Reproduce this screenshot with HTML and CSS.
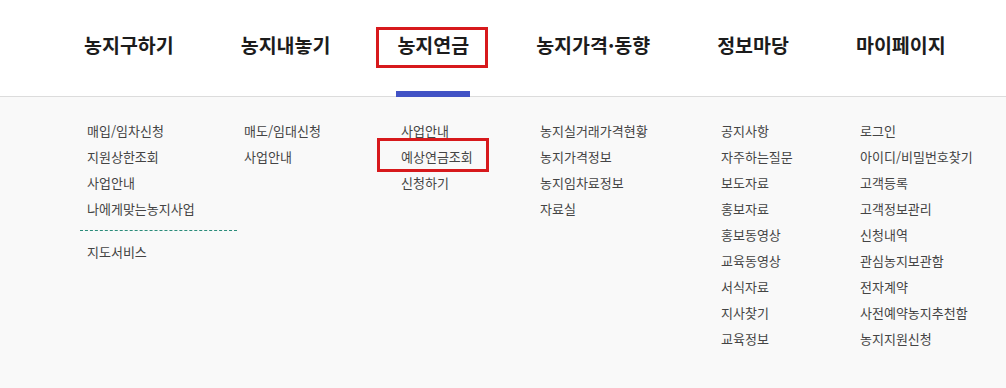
FILE: index.html
```html
<!DOCTYPE html>
<html lang="ko">
<head>
<meta charset="utf-8">
<link rel="stylesheet" href="styles.css">
</head>
<body>
<header class="header">
  <ul class="gnb">
    <li class="gnb-item"><a>농지구하기</a></li>
    <li class="gnb-item"><a>농지내놓기</a></li>
    <li class="gnb-item active"><a>농지연금</a><span class="mark mark-top"></span><span class="bar"></span></li>
    <li class="gnb-item"><a>농지가격·동향</a></li>
    <li class="gnb-item"><a>정보마당</a></li>
    <li class="gnb-item"><a>마이페이지</a></li>
  </ul>
</header>
<section class="panel">
  <ul class="col c1">
    <li>매입/임차신청</li>
    <li>지원상한조회</li>
    <li>사업안내</li>
    <li>나에게맞는농지사업</li>
    <li class="sep"></li>
    <li>지도서비스</li>
  </ul>
  <ul class="col c2">
    <li>매도/임대신청</li>
    <li>사업안내</li>
  </ul>
  <ul class="col c3">
    <li>사업안내</li>
    <li class="hl">예상연금조회<span class="mark mark-sub"></span></li>
    <li>신청하기</li>
  </ul>
  <ul class="col c4">
    <li>농지실거래가격현황</li>
    <li>농지가격정보</li>
    <li>농지임차료정보</li>
    <li>자료실</li>
  </ul>
  <ul class="col c5">
    <li>공지사항</li>
    <li>자주하는질문</li>
    <li>보도자료</li>
    <li>홍보자료</li>
    <li>홍보동영상</li>
    <li>교육동영상</li>
    <li>서식자료</li>
    <li>지사찾기</li>
    <li>교육정보</li>
  </ul>
  <ul class="col c6">
    <li>로그인</li>
    <li>아이디/비밀번호찾기</li>
    <li>고객등록</li>
    <li>고객정보관리</li>
    <li>신청내역</li>
    <li>관심농지보관함</li>
    <li>전자계약</li>
    <li>사전예약농지추천함</li>
    <li>농지지원신청</li>
  </ul>
</section>
</body>
</html>
```

FILE: styles.css
```css
html, body {
  margin: 0;
  padding: 0;
  height: 100%;
}
body {
  font-family: "Noto Sans CJK KR", "Noto Sans", sans-serif;
  background: #f9f9f9;
  overflow: hidden;
}
ul {
  list-style: none;
  margin: 0;
  padding: 0;
}
.header {
  background: #fff;
  height: 96px;
  border-bottom: 1px solid #dcdcdc;
  box-sizing: content-box;
}
.gnb {
  display: flex;
  gap: 67px;
  padding-left: 84px;
}
.gnb-item {
  position: relative;
  height: 96px;
}
.gnb-item a {
  display: block;
  line-height: 90px;
  font-size: 19.5px;
  font-weight: 600;
  color: #1c1c1c;
  white-space: nowrap;
}
.mark {
  position: absolute;
  border: 3px solid #d7191c;
  box-sizing: border-box;
}
.mark-top {
  left: -21px;
  top: 27px;
  width: 112px;
  height: 41px;
}
.bar {
  position: absolute;
  left: -1px;
  top: 91px;
  width: 74px;
  height: 6px;
  background: #4152c5;
}
.panel {
  display: flex;
  padding: 21px 0 0 80px;
}
.col {
  padding-left: 7px;
  font-size: 13px;
  line-height: 26px;
  color: #444;
  white-space: nowrap;
}
.c1 { width: 150px; }
.c2 { width: 150px; }
.c3 { width: 132px; }
.c4 { width: 174px; }
.c5 { width: 132px; }
.c6 { width: 140px; }
.col .sep {
  height: 0;
  margin: 8px 0 8px -7px;
  width: 157px;
  border-top: 1px dashed #2a8c7a;
}
.hl {
  position: relative;
}
.mark-sub {
  left: -24px;
  top: -6px;
  width: 112px;
  height: 34px;
}
```
